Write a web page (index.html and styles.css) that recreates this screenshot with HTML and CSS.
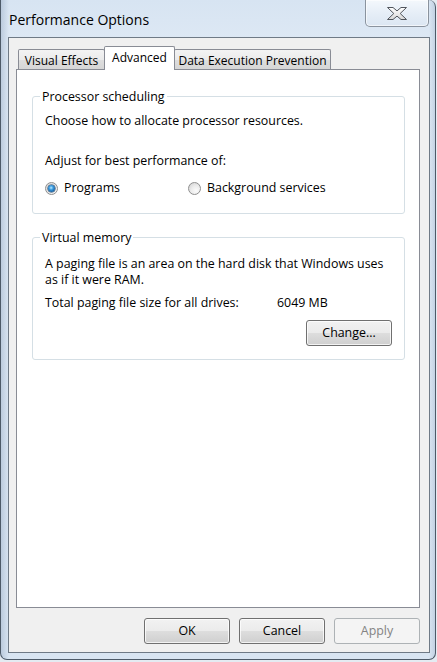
FILE: index.html
```html
<!DOCTYPE html>
<html>
<head>
<meta charset="utf-8">
<title>Performance Options</title>
<link rel="stylesheet" href="styles.css">
</head>
<body>
<div class="window">
  <div class="titlebar">
    <div class="title">Performance Options</div>
    <div class="close">
      <svg width="22" height="15" viewBox="0 0 22 15">
        <defs>
          <linearGradient id="xg" x1="0" y1="0" x2="0" y2="1">
            <stop offset="0" stop-color="#ffffff"/>
            <stop offset="1" stop-color="#d8d8d8"/>
          </linearGradient>
        </defs>
        <polygon points="1.5,1.5 7,1.5 11,4.9 15,1.5 20.5,1.5 14.2,7.5 20.5,13.5 15,13.5 11,10.1 7,13.5 1.5,13.5 7.8,7.5" fill="url(#xg)" stroke="#50555c" stroke-width="1" stroke-linejoin="round"/>
      </svg>
    </div>
  </div>
  <div class="client">
    <div class="tabs">
      <div class="tab tab-visual">Visual Effects</div>
      <div class="tab tab-adv active">Advanced</div>
      <div class="tab tab-dep">Data Execution Prevention</div>
    </div>
    <div class="panel">
      <div class="group group-proc">
        <div class="legend">Processor scheduling</div>
        <div class="line l-choose">Choose how to allocate processor resources.</div>
        <div class="line l-adjust">Adjust for best performance of:</div>
        <div class="radios">
          <div class="radio-item ri-programs"><span class="radio checked"></span><span class="rlabel">Programs</span></div>
          <div class="radio-item"><span class="radio"></span><span class="rlabel">Background services</span></div>
        </div>
      </div>
      <div class="group group-vm">
        <div class="legend">Virtual memory</div>
        <div class="line l-paging">A paging file is an area on the hard disk that Windows uses<br>as if it were RAM.</div>
        <div class="line l-total"><span class="total-label">Total paging file size for all drives:</span><span>6049 MB</span></div>
        <div class="change-row"><div class="btn">Change...</div></div>
      </div>
    </div>
    <div class="buttons">
      <div class="btn">OK</div>
      <div class="btn">Cancel</div>
      <div class="btn disabled">Apply</div>
    </div>
  </div>
</div>
</body>
</html>
```
FILE: styles.css
```css
* { box-sizing: border-box; }
html, body { margin: 0; padding: 0; }
body {
  width: 437px;
  height: 662px;
  background: #e4ebf2;
  font-family: "Segoe UI", "Open Sans", "Noto Sans", sans-serif;
  font-size: 12.4px;
  line-height: 16px;
  color: #000;
  overflow: hidden;
}
.window {
  width: 436px;
  height: 660px;
  border: 1px solid #4d5a68;
  border-top: none;
  border-radius: 0 7px 7px 7px;
  background:
    linear-gradient(90deg, rgba(150,170,195,0.45) 0, rgba(255,255,255,0) 8px, rgba(255,255,255,0) 428px, rgba(150,170,195,0.45) 436px),
    linear-gradient(180deg, #d7e4f2 0, #dde8f4 40px, #d9e5f2 100%);
  padding: 0 5px 6px 7px;
  display: flex;
  flex-direction: column;
}
.titlebar {
  height: 37px;
  display: flex;
  align-items: flex-start;
}
.title {
  margin-top: 11px;
  margin-left: 1px;
  font-size: 14px;
  line-height: 18px;
  color: #000;
}
.close {
  margin-left: auto;
  margin-right: 1px;
  width: 64px;
  height: 27px;
  border: 1px solid #8a939e;
  border-top: none;
  border-radius: 0 0 5px 5px;
  background: linear-gradient(180deg, #f4f8fc 0, #e6eef7 50%, #dbe6f2 100%);
  box-shadow: inset 0 0 0 1px rgba(255,255,255,0.6);
  display: flex;
  align-items: center;
  justify-content: center;
  padding-top: 1px;
}
.close svg { display: block; }
.client {
  width: 422px;
  height: 616px;
  border: 1px solid #6f7a86;
  background: #f0f0f0;
  padding: 8px 9px 8px 7px;
  display: flex;
  flex-direction: column;
}
.tabs {
  height: 23px;
  display: flex;
  align-items: flex-end;
  padding-left: 2px;
  font-size: 12px;
}
.tab {
  height: 20px;
  border: 1px solid #898c95;
  border-bottom: none;
  border-radius: 2px 2px 0 0;
  background: linear-gradient(180deg, #f3f3f3 0, #ebebeb 50%, #dedede 51%, #d6d6d6 100%);
  text-align: center;
  line-height: 19px;
  padding-top: 1px;
  white-space: nowrap;
}
.tab-visual { width: 87px; }
.tab-adv { width: 71px; margin-left: -1px; }
.tab-dep { width: 157px; margin-left: -1px; }
.tab.active {
  height: 24px;
  margin-bottom: -1px;
  background: #fff;
  position: relative;
  z-index: 1;
  line-height: 20px;
}
.panel {
  height: 539px;
  background: #fff;
  border: 1px solid #898c95;
  padding: 0 14px 0 15px;
}
.group {
  border: 1px solid #d5dfe5;
  border-radius: 3px;
  padding: 0 12px 0 12px;
}
.group-proc { margin-top: 26px; padding-bottom: 18px; }
.group-vm { margin-top: 23px; padding-bottom: 13px; }
.legend {
  display: table;
  margin: -8px 0 0 -5px;
  padding: 0 2px;
  background: #fff;
}
.line { position: relative; top: 1px; }
.l-choose { margin-top: 7px; }
.l-adjust { margin-top: 24px; }
.radios { margin-top: 11px; display: flex; align-items: center; height: 16px; position: relative; top: 1px; }
.radio-item { display: flex; align-items: center; }
.ri-programs { width: 143px; }
.radio {
  width: 13px;
  height: 13px;
  border-radius: 50%;
  border: 1px solid #8f8f8f;
  background: radial-gradient(circle at 65% 70%, #fbfbfb 0, #ececec 45%, #cfcfcf 100%);
  display: flex;
  align-items: center;
  justify-content: center;
  margin-right: 6px;
  flex: none;
}
.radio.checked::after {
  content: "";
  width: 7px;
  height: 7px;
  border-radius: 50%;
  background: radial-gradient(circle at 45% 40%, #b9ecff 0, #3b9be0 35%, #0f5392 80%, #0a3a6a 100%);
  box-shadow: 0 0 0 0.5px #173b5e;
}
.l-paging { margin-top: 9px; }
.l-total { margin-top: 7px; display: flex; }
.total-label { width: 232px; }
.change-row { margin-top: 10px; display: flex; justify-content: flex-end; }
.btn {
  width: 86px;
  height: 26px;
  border: 1px solid #707070;
  border-radius: 3px;
  background: linear-gradient(180deg, #f2f2f2 0, #ebebeb 48%, #dddddd 52%, #cfcfcf 100%);
  box-shadow: inset 0 0 0 1px rgba(255,255,255,0.75);
  text-align: center;
  line-height: 24px;
}
.btn.disabled {
  border-color: #adb2b5;
  background: #f4f4f4;
  box-shadow: none;
  color: #838383;
}
.buttons {
  margin-top: 10px;
  display: flex;
  justify-content: flex-end;
  gap: 9px;
}
```
